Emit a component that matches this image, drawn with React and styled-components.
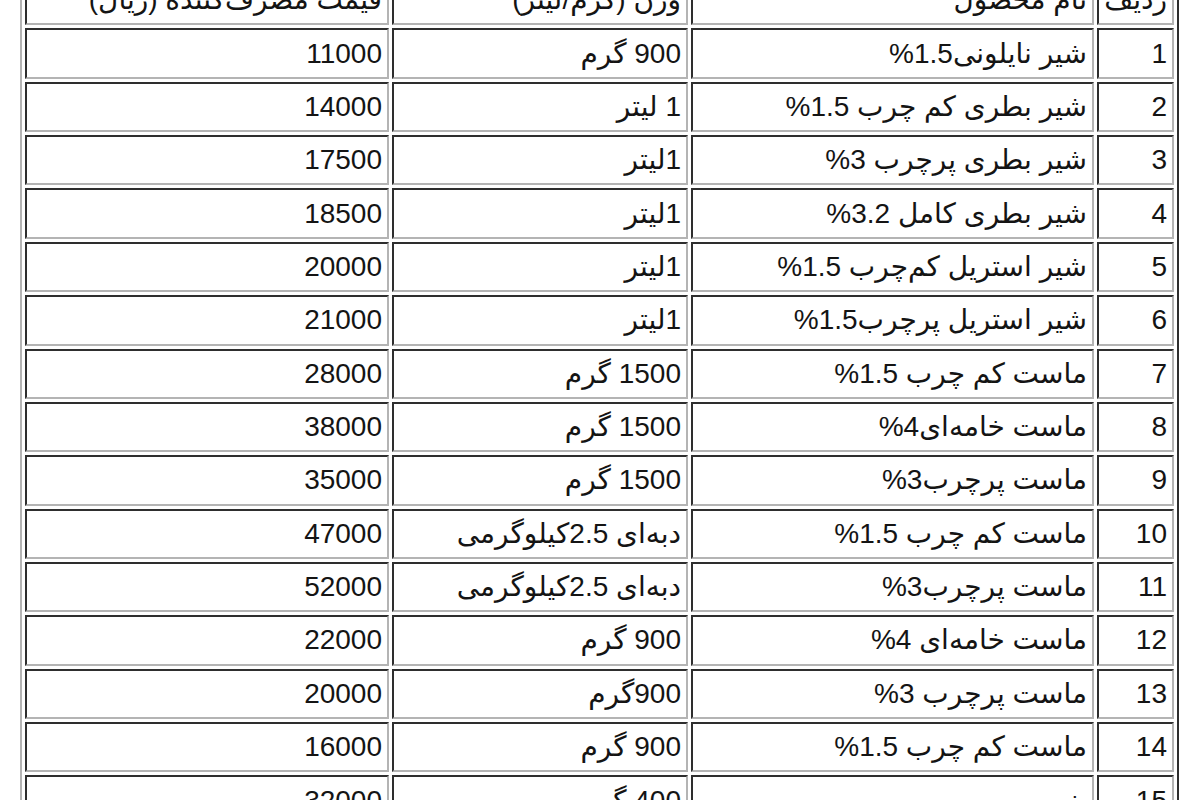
import React from 'react';
import styled, { createGlobalStyle } from 'styled-components';

const GlobalStyle = createGlobalStyle`
  html, body {
    margin: 0;
    padding: 0;
    background: #ffffff;
    overflow: hidden;
  }
`;

const Page = styled.div`
  width: 1200px;
  height: 800px;
  overflow: hidden;
  padding-left: 20px;
  box-sizing: border-box;
`;

const Table = styled.table`
  direction: rtl;
  margin-top: -30px;
  border-collapse: separate;
  border-spacing: 3px;
  border-style: solid;
  border-width: 2px;
  border-color: #b4b4b4 #2e2e2e #2e2e2e #b4b4b4;
  table-layout: fixed;
  font-family: 'Liberation Sans', 'DejaVu Sans', sans-serif;
  font-size: 28px;
  color: #141414;
`;

const Cell = styled.td`
  box-sizing: border-box;
  height: 50.36px;
  width: ${props => props.w}px;
  padding: 0 5px 0 4px;
  border-style: solid;
  border-width: 2px;
  border-color: #2e2e2e #b4b4b4 #b4b4b4 #2e2e2e;
  text-align: right;
  vertical-align: middle;
  white-space: nowrap;
  line-height: 1;
`;

const cols = [77, 403, 296, 364];

const rows = [
  ['ردیف', 'نام محصول', 'وزن (گرم/لیتر)', 'قیمت مصرف‌کننده (ریال)'],
  ['1', 'شیر نایلونی1.5%', '900 گرم', '11000'],
  ['2', 'شیر بطری کم چرب 1.5%', '1 لیتر', '14000'],
  ['3', 'شیر بطری پرچرب 3%', '1لیتر', '17500'],
  ['4', 'شیر بطری کامل 3.2%', '1لیتر', '18500'],
  ['5', 'شیر استریل کم‌چرب 1.5%', '1لیتر', '20000'],
  ['6', 'شیر استریل پرچرب1.5%', '1لیتر', '21000'],
  ['7', 'ماست کم چرب 1.5%', '1500 گرم', '28000'],
  ['8', 'ماست خامه‌ای4%', '1500 گرم', '38000'],
  ['9', 'ماست پرچرب3%', '1500 گرم', '35000'],
  ['10', 'ماست کم چرب 1.5%', 'دبه‌ای 2.5کیلوگرمی', '47000'],
  ['11', 'ماست پرچرب3%', 'دبه‌ای 2.5کیلوگرمی', '52000'],
  ['12', 'ماست خامه‌ای 4%', '900 گرم', '22000'],
  ['13', 'ماست پرچرب 3%', '900گرم', '20000'],
  ['14', 'ماست کم چرب 1.5%', '900 گرم', '16000'],
  ['15', 'پنیر', '400 گرم', '32000'],
];

export default function App() {
  return (
    <Page>
      <GlobalStyle />
      <Table>
        <tbody>
          {rows.map((row, i) => (
            <tr key={i}>
              {row.map((text, j) => (
                <Cell key={j} w={cols[j]}>{text}</Cell>
              ))}
            </tr>
          ))}
        </tbody>
      </Table>
    </Page>
  );
}
